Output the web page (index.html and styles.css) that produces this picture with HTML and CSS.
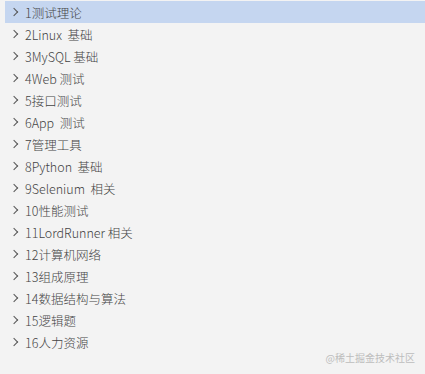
FILE: index.html
```html
<!DOCTYPE html>
<html lang="zh">
<head>
  <meta charset="UTF-8">
  <title>目录</title>
  <link rel="stylesheet" href="styles.css">
</head>
<body>
  <div class="tree">
    <div class="item active"><span class="arrow"></span>1测试理论</div>
    <div class="item"><span class="arrow"></span>2Linux&nbsp; 基础</div>
    <div class="item"><span class="arrow"></span>3MySQL 基础</div>
    <div class="item"><span class="arrow"></span>4Web 测试</div>
    <div class="item"><span class="arrow"></span>5接口测试</div>
    <div class="item"><span class="arrow"></span>6App&nbsp; 测试</div>
    <div class="item"><span class="arrow"></span>7管理工具</div>
    <div class="item"><span class="arrow"></span>8Python&nbsp; 基础</div>
    <div class="item"><span class="arrow"></span>9Selenium&nbsp; 相关</div>
    <div class="item"><span class="arrow"></span>10性能测试</div>
    <div class="item"><span class="arrow"></span>11LordRunner 相关</div>
    <div class="item"><span class="arrow"></span>12计算机网络</div>
    <div class="item"><span class="arrow"></span>13组成原理</div>
    <div class="item"><span class="arrow"></span>14数据结构与算法</div>
    <div class="item"><span class="arrow"></span>15逻辑题</div>
    <div class="item"><span class="arrow"></span>16人力资源</div>
  </div>
  <div class="mark">@稀土掘金技术社区</div>
</body>
</html>
```
FILE: styles.css
```css
* {
  margin: 0;
  padding: 0;
  box-sizing: border-box;
}
body {
  width: 425px;
  height: 374px;
  background: #f3f3f3;
  font-family: "Noto Sans CJK SC", sans-serif;
  color: #444;
  overflow: hidden;
}
.tree {
  padding: 1px 0 0 5px;
}
.item {
  display: flex;
  align-items: center;
  height: 22px;
  font-size: 12.5px;
  font-weight: 300;
}
.item.active {
  background: #c5d6f0;
}
.arrow {
  width: 20px;
  height: 22px;
  position: relative;
}
.arrow::before {
  content: "";
  position: absolute;
  left: 6px;
  top: 8px;
  width: 5px;
  height: 5px;
  border-right: 1.2px solid #555;
  border-bottom: 1.2px solid #555;
  transform: rotate(-45deg);
}
.mark {
  text-align: right;
  padding: 0 10px 0 0;
  line-height: 10px;
  font-size: 10px;
  color: #bdbdbd;
}
```
